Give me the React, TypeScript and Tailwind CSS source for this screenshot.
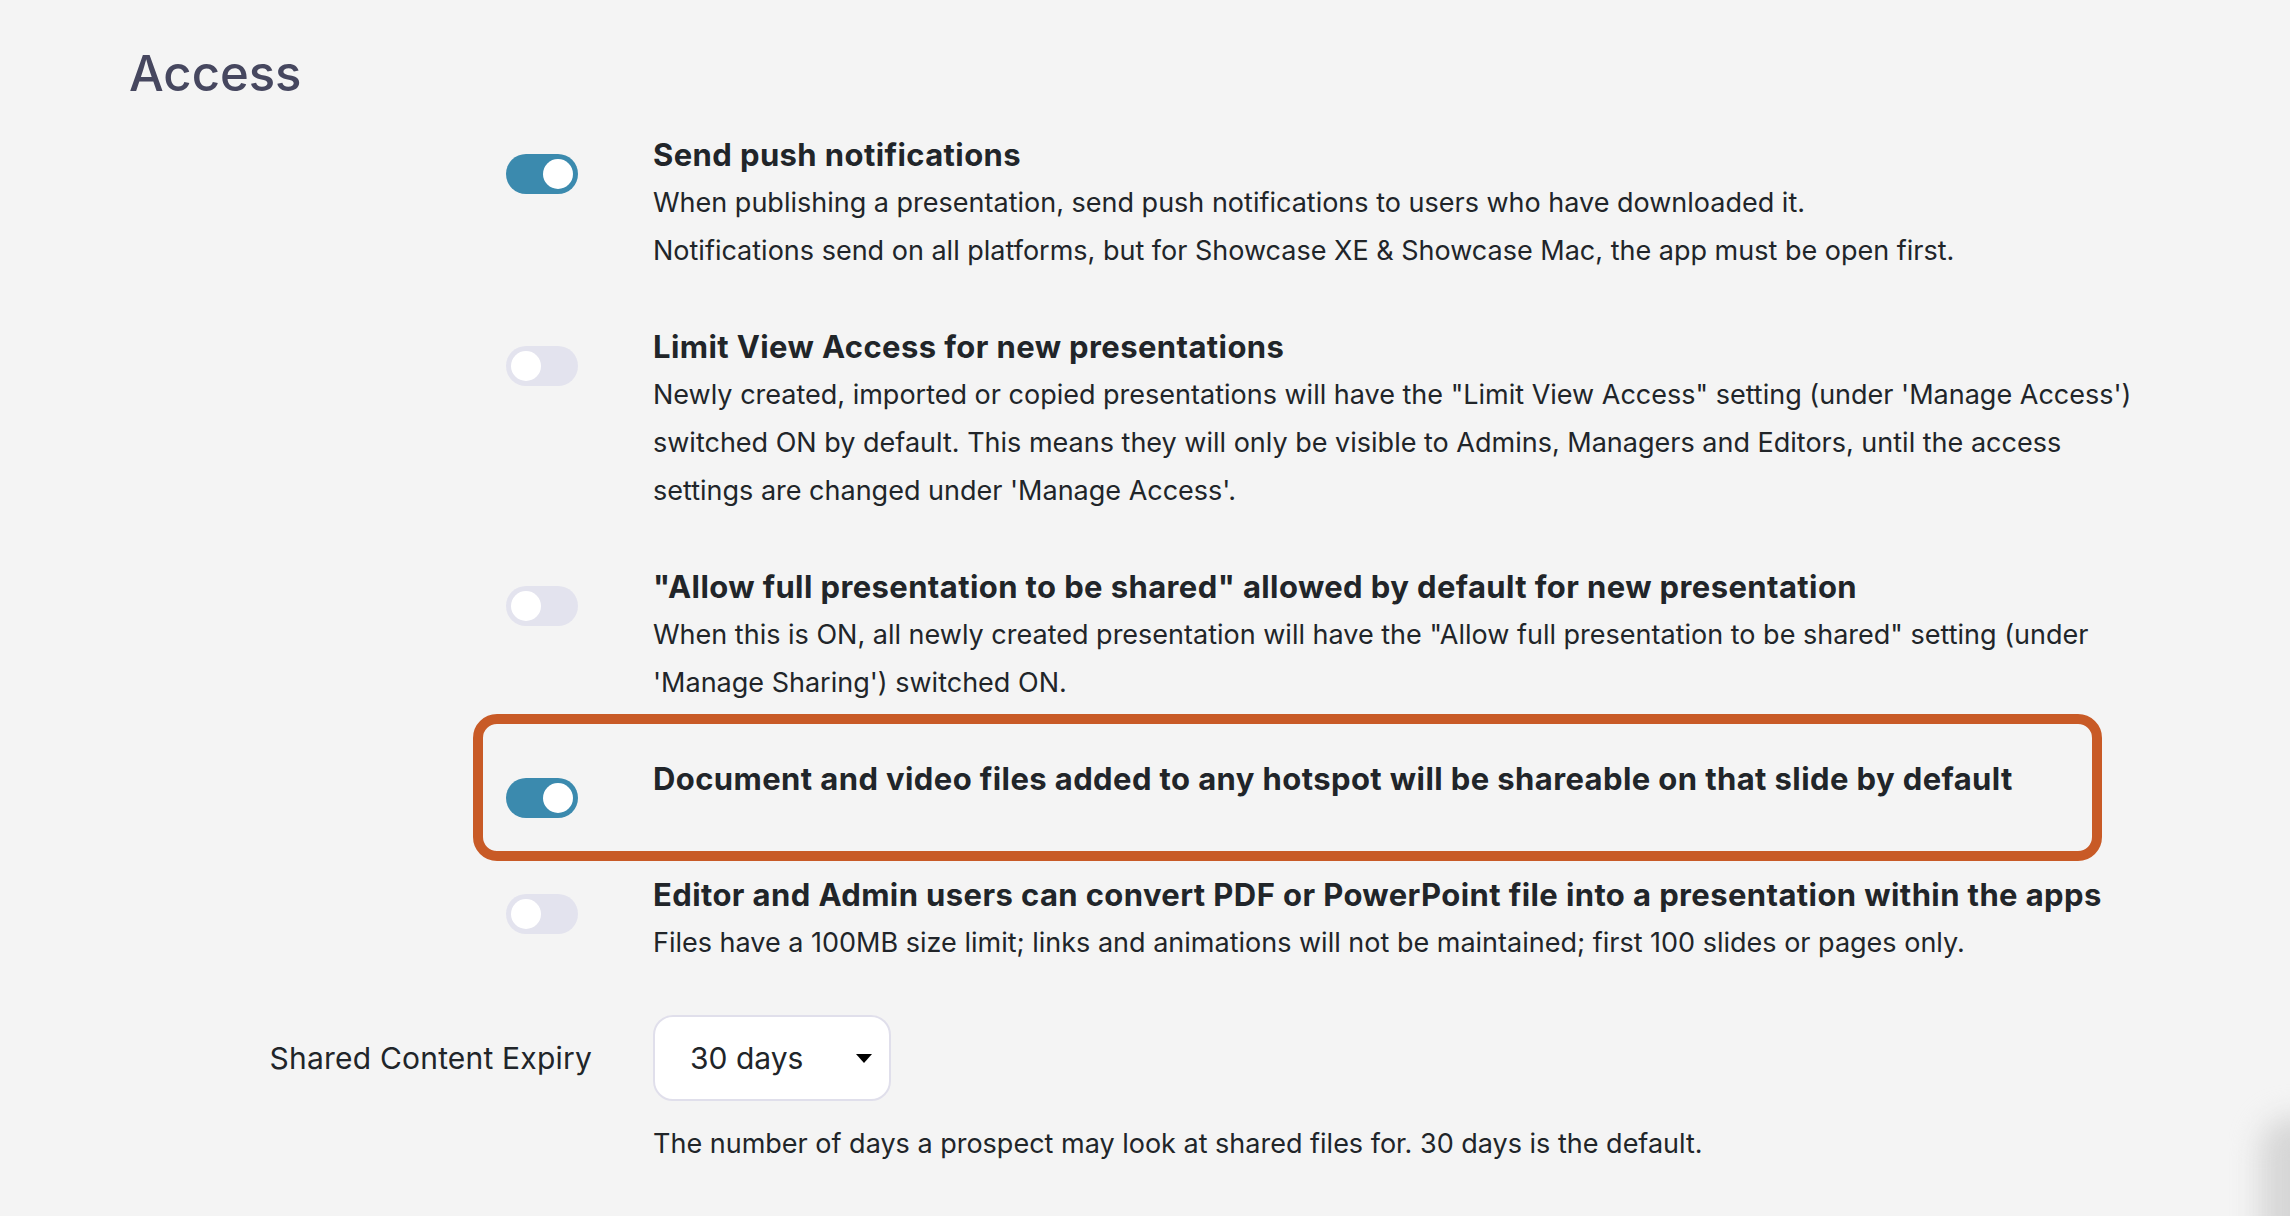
import React, { useState } from 'react';

type Setting = {
  id: string;
  title: string;
  lines: string[];
  on: boolean;
  highlight?: boolean;
};

const settings: Setting[] = [
  {
    id: 'push',
    title: 'Send push notifications',
    lines: [
      'When publishing a presentation, send push notifications to users who have downloaded it.',
      'Notifications send on all platforms, but for Showcase XE & Showcase Mac, the app must be open first.',
    ],
    on: true,
  },
  {
    id: 'limit',
    title: 'Limit View Access for new presentations',
    lines: [
      'Newly created, imported or copied presentations will have the "Limit View Access" setting (under \'Manage Access\') switched ON by default. This means they will only be visible to Admins, Managers and Editors, until the access settings are changed under \'Manage Access\'.',
    ],
    on: false,
  },
  {
    id: 'share',
    title: '"Allow full presentation to be shared" allowed by default for new presentation',
    lines: [
      'When this is ON, all newly created presentation will have the "Allow full presentation to be shared" setting (under \'Manage Sharing\') switched ON.',
    ],
    on: false,
  },
  {
    id: 'hotspot',
    title: 'Document and video files added to any hotspot will be shareable on that slide by default',
    lines: [],
    on: true,
    highlight: true,
  },
  {
    id: 'convert',
    title: 'Editor and Admin users can convert PDF or PowerPoint file into a presentation within the apps',
    lines: ['Files have a 100MB size limit; links and animations will not be maintained; first 100 slides or pages only.'],
    on: false,
  },
];

const Toggle: React.FC<{ on: boolean; onChange: () => void }> = ({ on, onChange }) => (
  <button
    type="button"
    onClick={onChange}
    className={`relative flex h-[40px] w-[72px] shrink-0 items-center rounded-full px-[5px] transition-colors ${
      on ? 'justify-end bg-[#3b8aae]' : 'justify-start bg-[#e3e3ee]'
    }`}
  >
    <span className="block h-[30px] w-[30px] rounded-full bg-white" />
  </button>
);

export default function App() {
  const [state, setState] = useState<Record<string, boolean>>(
    Object.fromEntries(settings.map((s) => [s.id, s.on]))
  );

  return (
    <div className="relative min-h-screen w-full overflow-hidden bg-[#f4f4f4] text-[#212529] font-['Inter','Liberation_Sans',sans-serif]">
      <div className="pl-[129px] pt-[42px]">
        <h1 className="text-[49px] leading-[64px] font-medium text-[#46475f] mb-[25px]">Access</h1>

        {settings.map((s) => (
          <div key={s.id} className={`relative flex items-start ${s.highlight ? 'mb-[68px]' : 'mb-12'}`}>
            {s.highlight && (
              <div className="pointer-events-none absolute left-[344px] right-[188px] top-[-41px] bottom-[-58px] rounded-[24px] border-[10px] border-[#c85a26]" />
            )}
            <div className="flex h-[48px] w-[524px] shrink-0 justify-end pr-[75px] pt-[23px]">
              <Toggle on={state[s.id]} onChange={() => setState((p) => ({ ...p, [s.id]: !p[s.id] }))} />
            </div>
            <div className="w-[1500px]">
              <h3 className="text-[31px] leading-[48px] font-bold tracking-[0.4px]">{s.title}</h3>
              {s.lines.map((l) => (
                <p key={l} className="text-[27px] leading-[48px]">
                  {l}
                </p>
              ))}
            </div>
          </div>
        ))}

        <div className="flex items-center">
          <div className="w-[524px] shrink-0 pr-[61px] text-right text-[30px] leading-[36px] tracking-[0.2px]">
            Shared Content Expiry
          </div>
          <div className="relative flex h-[86px] w-[238px] items-center justify-between rounded-[20px] border-2 border-[#e0dfeb] bg-white pl-[35px] pr-[17px]">
            <span className="text-[30px] leading-[36px]">30 days</span>
            <svg width="16" height="9" viewBox="0 0 16 9">
              <path d="M0 0 L16 0 L8 9 Z" fill="#000" />
            </svg>
          </div>
        </div>
        <p className="ml-[524px] mt-[19px] text-[27px] leading-[48px]">
          The number of days a prospect may look at shared files for. 30 days is the default.
        </p>
      </div>
      <div className="pointer-events-none absolute bottom-[-50px] right-[-40px] h-[150px] w-[70px] rounded-full bg-[#d6d6d6] blur-[14px]" />
    </div>
  );
}
